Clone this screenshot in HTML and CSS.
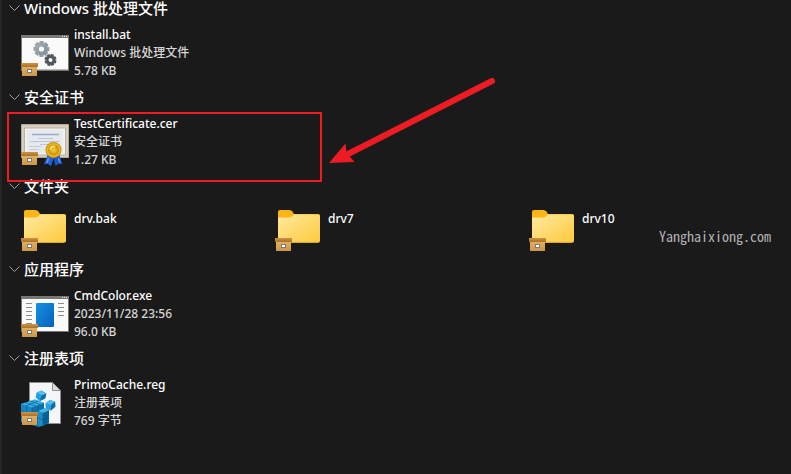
FILE: index.html
```html
<!DOCTYPE html>
<html lang="zh-CN">
<head>
<meta charset="utf-8">
<title>文件</title>
<link rel="stylesheet" href="styles.css">
</head>
<body>
<svg class="defs" aria-hidden="true">
  <defs>
    <linearGradient id="lid" x1="0" y1="0" x2="0" y2="1"><stop offset="0" stop-color="#cf9245"/><stop offset="1" stop-color="#a87126"/></linearGradient>
    <linearGradient id="box" x1="0" y1="0" x2="0" y2="1"><stop offset="0" stop-color="#e2b264"/><stop offset="1" stop-color="#cd9648"/></linearGradient>
    <linearGradient id="folder" x1="0" y1="0" x2="1" y2="1"><stop offset="0" stop-color="#ffe9a2"/><stop offset="1" stop-color="#ffca3b"/></linearGradient>
    <linearGradient id="blue" x1="0" y1="0" x2="1" y2="1"><stop offset="0" stop-color="#1592e2"/><stop offset="1" stop-color="#0660ba"/></linearGradient>
    <linearGradient id="gear" x1="0" y1="0" x2="1" y2="1"><stop offset="0" stop-color="#a9b2ba"/><stop offset="1" stop-color="#7e8991"/></linearGradient>
    <radialGradient id="gold"><stop offset="0" stop-color="#f3cc45"/><stop offset=".45" stop-color="#dba517"/><stop offset=".6" stop-color="#c98f0c"/><stop offset=".75" stop-color="#f0bd25"/><stop offset="1" stop-color="#c18808"/></radialGradient>
    <symbol id="badge" viewBox="0 0 17 14">
      <path d="M1 3h15v10H1z" fill="url(#box)"/>
      <path d="M0 0h17v4H0z" fill="url(#lid)"/>
      <path d="M6 6h5v4H6z" fill="#777b80"/>
      <path d="M7 7h3v2H7z" fill="#fff"/>
    </symbol>
    <symbol id="folder-icon" viewBox="0 -1 60 54">
      <path d="M10 8q0-2 2-2h9q2.500 0 3.500 1.500l1.500 2.500h24q2 0 2 2v20H10z" fill="#fdb515"/>
      <path d="M10 14h11q2 0 3-1l2-2h24.500q1.500 0 1.500 1.500V36.500q0 2.500-2.500 2.500h-37Q10 39 10 36.500z" fill="#e6a51c"/>
      <path d="M10 13.500h11q2 0 3-1l2-2H50.500q1.500 0 1.500 1.500V36q0 2-2 2H12q-2 0-2-2z" fill="url(#folder)"/>
      <use href="#badge" x="7" y="34" width="17" height="14"/>
    </symbol>
    <path id="tooth" d="M-1.900-8h3.800l.7 3.500h-5.200z"/>
    <g id="cog">
      <use href="#tooth"/><use href="#tooth" transform="rotate(45)"/><use href="#tooth" transform="rotate(90)"/><use href="#tooth" transform="rotate(135)"/><use href="#tooth" transform="rotate(180)"/><use href="#tooth" transform="rotate(225)"/><use href="#tooth" transform="rotate(270)"/><use href="#tooth" transform="rotate(315)"/>
      <path fill-rule="evenodd" d="M0-6a6 6 0 1 0 0 12a6 6 0 1 0 0-12zM0-2.600a2.600 2.600 0 1 1 0 5.200a2.600 2.600 0 1 1 0-5.200z"/>
    </g>
    <g id="cube">
      <path d="M0-5L5-2.500 4.500 2.500-.5 5.500-5 2.500-4.500-2.500z" fill="#1584c2"/>
      <path d="M0-5L5-2.500.5 0-4.500-2.500z" fill="#4fbfec"/>
      <path d="M.5 0L5-2.500 4.500 2.500-.5 5.500z" fill="#0d6ba5"/>
      <path d="M-4.500-2.500L.5 0-.5 5.500-5 2.500z" fill="#27a1dc"/>
    </g>
  </defs>
</svg>

<main class="files">
  <section class="group">
    <h2><button class="group-title" type="button"><svg class="chevron" viewBox="0 0 11 7"><path d="M.5.500l5 5 5-5"/></svg>Windows 批处理文件</button></h2>
    <ul class="tiles">
      <li class="tile">
        <svg class="icon" viewBox="0 -3 60 54">
          <path d="M7 7h48v36H7z" fill="#777773"/>
          <path d="M8 10h46v31.500H8z" fill="#fafafa"/>
          <path d="M48 8h1v1h-1zM50 8h1v1h-1zM52 8h1v1h-1z" fill="#e8e8e8"/>
          <use href="#cog" transform="translate(27.500 21)" fill="url(#gear)"/>
          <use href="#cog" transform="translate(36.500 32) rotate(20) scale(.75)" fill="#50585e"/>
          <use href="#badge" x="7" y="35" width="17" height="14"/>
        </svg>
        <div class="info"><span class="name">install.bat</span><span>Windows 批处理文件</span><span>5.78 KB</span></div>
      </li>
    </ul>
  </section>

  <section class="group">
    <h2><button class="group-title" type="button"><svg class="chevron" viewBox="0 0 11 7"><path d="M.5.500l5 5 5-5"/></svg>安全证书</button></h2>
    <ul class="tiles">
      <li class="tile marked">
        <svg class="icon" viewBox="0 -2 60 54">
          <path d="M7.500 8.500h47v33h-47z" fill="#d6ccbc" stroke="#e9e1d3" stroke-dasharray="1 1"/>
          <path d="M10.500 12h41v27h-41z" fill="#f1f1ee" stroke="#bdb3a3"/>
          <path d="M13 14h36v23H13z" fill="#e6e9ed"/>
          <path d="M18 18.500h27" stroke="#9fa9c9" stroke-width="1.500"/>
          <path d="M24 22.500h15M15 30.500h12M16 33.500h9" stroke="#c2c9d8"/>
          <path d="M16 25.500h30M26 28.500h12" stroke="#bec6da"/>
          <path d="M34 38l-4 10.500 3.500-1 3.500 2.500 3-9z" fill="#2463d2"/>
          <path d="M45 38l3.500 10.500-3.500-1-3.500 2.500-2.500-9z" fill="#1d56c2"/>
          <path d="M34.500 42l-1.500 5M44.500 42l1.500 5" stroke="#5e98f5" stroke-width="1.500"/>
          <circle cx="39.500" cy="34" r="8" fill="url(#gold)"/>
          <path d="M36 33.500q1.500-4 5-3" fill="none" stroke="#ffe37a" stroke-width="1.500"/>
          <use href="#badge" x="7" y="36" width="17" height="14"/>
        </svg>
        <div class="info"><span class="name">TestCertificate.cer</span><span>安全证书</span><span>1.27 KB</span></div>
        <svg class="arrow" viewBox="0 0 176 96" aria-hidden="true">
          <path d="M168 9L24 82" fill="none" stroke="#ed1c24" stroke-width="6" stroke-linecap="round"/>
          <path d="M5 91L21.500 71.500 22.500 80 27 86 30.500 90z" fill="#ed1c24"/>
        </svg>
      </li>
    </ul>
  </section>

  <section class="group folders">
    <h2><button class="group-title" type="button"><svg class="chevron" viewBox="0 0 11 7"><path d="M.5.500l5 5 5-5"/></svg>文件夹</button></h2>
    <ul class="tiles">
      <li class="tile"><svg class="icon"><use href="#folder-icon"/></svg><div class="info"><span class="name">drv.bak</span></div></li>
      <li class="tile"><svg class="icon"><use href="#folder-icon"/></svg><div class="info"><span class="name">drv7</span></div></li>
      <li class="tile"><svg class="icon"><use href="#folder-icon"/></svg><div class="info"><span class="name">drv10</span></div></li>
    </ul>
    <span class="watermark">Yanghaixiong.com</span>
  </section>

  <section class="group">
    <h2><button class="group-title" type="button"><svg class="chevron" viewBox="0 0 11 7"><path d="M.5.500l5 5 5-5"/></svg>应用程序</button></h2>
    <ul class="tiles">
      <li class="tile">
        <svg class="icon" viewBox="0 -4 60 54">
          <path d="M7 6h48v36H7z" fill="#777773"/>
          <path d="M8 9h46v32H8z" fill="#fafafa"/>
          <path d="M48 7h1v1h-1zM50 7h1v1h-1zM52 7h1v1h-1z" fill="#e8e8e8"/>
          <path d="M12 13.500h6M12 17.500h6M12 21.500h6M12 25.500h6M12 29.500h6M12 33.500h6M44 13.500h6M44 17.500h6M44 21.500h6M44 25.500h6" stroke="#8c8c8c"/>
          <rect x="22" y="13" width="18" height="24" rx="1" fill="url(#blue)"/>
          <use href="#badge" x="7" y="34" width="17" height="14"/>
        </svg>
        <div class="info"><span class="name">CmdColor.exe</span><span>2023/11/28 23:56</span><span>96.0 KB</span></div>
      </li>
    </ul>
  </section>

  <section class="group">
    <h2><button class="group-title" type="button"><svg class="chevron" viewBox="0 0 11 7"><path d="M.5.500l5 5 5-5"/></svg>注册表项</button></h2>
    <ul class="tiles">
      <li class="tile">
        <svg class="icon" viewBox="0 -1 60 54">
          <path d="M15.500 6.500h23l8 8v33h-31z" fill="#f6f6f8" stroke="#8e8e8e"/>
          <path d="M38.500 6.500v8h8z" fill="#dcdcdc" stroke="#8e8e8e"/>
          <path d="M7 28l14-4.500 9 3.500v5l5 2v13l-10 4-18-5z" fill="#1787c4"/>
          <path d="M7 28l14-4.500 9 3.500-12 4.500z" fill="#35aee2"/>
          <path d="M18 31.500l12-4.500v6l-6 2v15l-6-2z" fill="#0d70aa"/>
          <path d="M24 35l6-2.500 5 2-6 2.500z" fill="#45b8e8"/>
          <path d="M24 35l5 2v13l-5-1z" fill="#1a8dcb"/>
          <path d="M29 37l6-2.500V47l-6 3z" fill="#08629a"/>
          <path d="M7 35l11 3.500 6-2.500M24 42l5 2 6-2.500M12.500 29.500v8M11 26.500l11 3.500M16 25l10 3.500M12 30l12-5M18 31.500v8M29 37v13M24 29.500v6" fill="none" stroke="#075783" stroke-width=".6"/>
          <use href="#cube" transform="translate(27 19.500) rotate(8)"/>
          <use href="#cube" transform="translate(36.500 29) rotate(-8)"/>
          <use href="#badge" x="7" y="36" width="17" height="14"/>
        </svg>
        <div class="info"><span class="name">PrimoCache.reg</span><span>注册表项</span><span>769 字节</span></div>
      </li>
    </ul>
  </section>
</main>
</body>
</html>
```
FILE: styles.css
```css
*, ::after { box-sizing: border-box; }

html { background: #1a1a1a; }

body {
  margin: 0;
  min-height: 100vh;
  border-left: 2px solid #262626;
  color: #d6d6d6;
  font: 500 12px/18px "Noto Sans", "Noto Sans CJK SC", sans-serif;
}

.defs { position: absolute; width: 0; height: 0; }

.group { padding-bottom: 10px; }

.folders {
  position: relative;
  padding-bottom: 4px;
}

h2 {
  margin: 0 0 9px;
  font-size: 15px;
  line-height: 16px;
}

.group-title {
  display: flex;
  align-items: center;
  gap: 4px;
  padding: 0 0 0 7px;
  border: 0;
  background: none;
  color: #fff;
  font: inherit;
  font-weight: 500;
}

.chevron {
  width: 11px;
  height: 7px;
  fill: none;
  stroke: #a0a0a0;
}

.tiles {
  display: grid;
  grid-template-columns: repeat(auto-fill, 254px);
  margin: 0;
  padding: 0 0 0 12px;
  list-style: none;
}

.tile {
  position: relative;
  display: flex;
  height: 54px;
}

.icon {
  flex: none;
  width: 60px;
  height: 54px;
}

.info {
  display: flex;
  flex-direction: column;
  padding-top: 1px;
  white-space: nowrap;
}

.name { color: #fff; }

.folders .info { padding-top: 7px; }

.marked::after {
  content: "";
  position: absolute;
  z-index: 1;
  top: -2px;
  left: -7px;
  width: 315px;
  height: 70px;
  border: 2px solid #ed1c24;
}

.arrow {
  position: absolute;
  top: -42px;
  left: 310px;
  width: 176px;
  height: 96px;
}

.watermark {
  position: absolute;
  top: 49px;
  right: 20px;
  color: #b4b4b4;
  font: 14px/18px "Noto Sans Mono CJK SC", "Liberation Mono", monospace;
}
```
